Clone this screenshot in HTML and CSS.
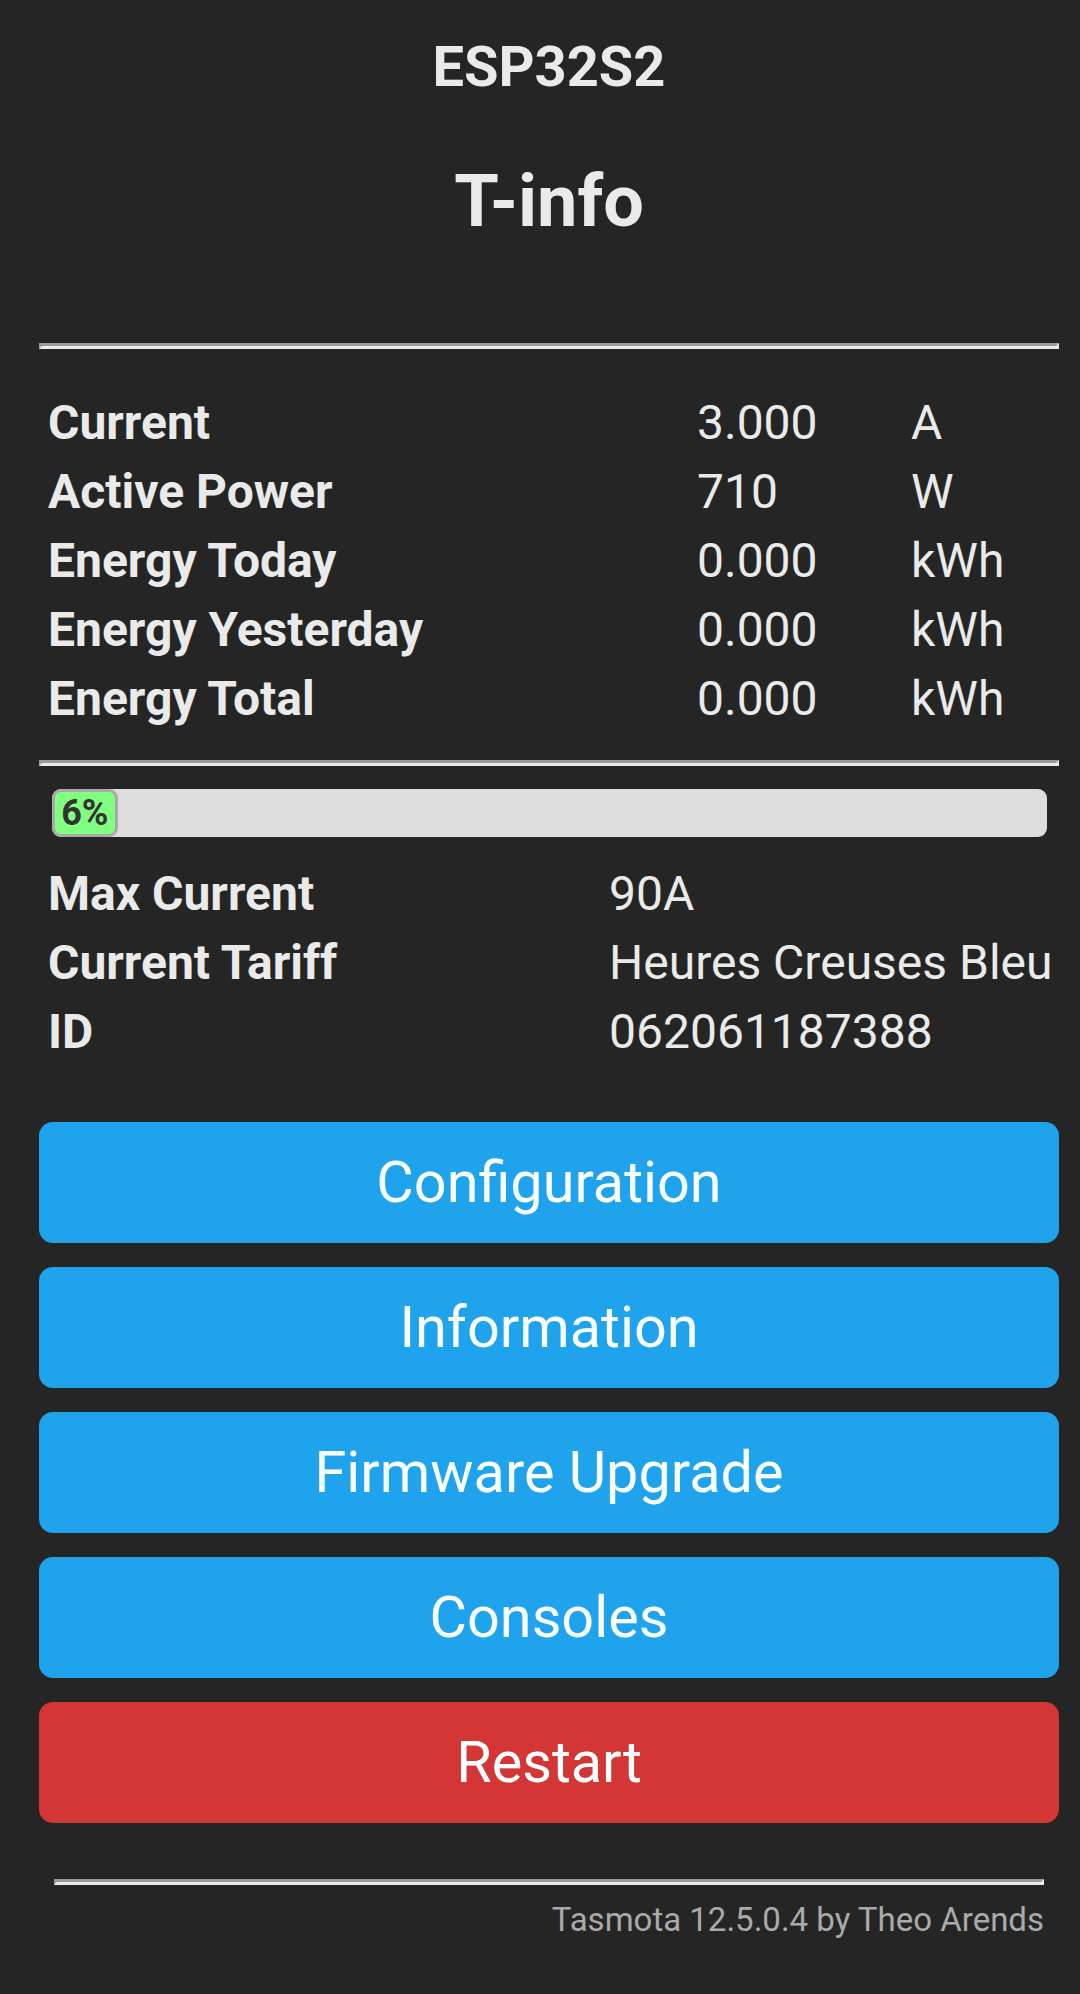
FILE: index.html
```html
<!DOCTYPE html>
<html lang="en">
<head>
    <meta charset="UTF-8">
    <title>T-info - Main Menu</title>
    <link rel="stylesheet" href="styles.css">
</head>
<body>
    <div class="main">
        <div class="header">
            <h3>ESP32S2</h3>
            <h2>T-info</h2>
        </div>

        <hr>

        <table class="sensors">
            <tr><th>Current</th><td>3.000</td><td>A</td></tr>
            <tr><th>Active Power</th><td>710</td><td>W</td></tr>
            <tr><th>Energy Today</th><td>0.000</td><td>kWh</td></tr>
            <tr><th>Energy Yesterday</th><td>0.000</td><td>kWh</td></tr>
            <tr><th>Energy Total</th><td>0.000</td><td>kWh</td></tr>
        </table>

        <hr>

        <div class="bar">
            <div class="bar-fill" style="width:6%">6%</div>
        </div>

        <table class="info">
            <tr><th>Max Current</th><td>90A</td></tr>
            <tr><th>Current Tariff</th><td>Heures Creuses Bleu</td></tr>
            <tr><th>ID</th><td>062061187388</td></tr>
        </table>

        <div class="menu">
            <button>Configuration</button>
            <button>Information</button>
            <button>Firmware Upgrade</button>
            <button>Consoles</button>
            <button class="bred">Restart</button>
        </div>

        <div class="footer">
            <hr>
            <a href="#">Tasmota 12.5.0.4 by Theo Arends</a>
        </div>
    </div>
</body>
</html>
```

FILE: styles.css
```css
body {
    margin: 0;
    background: #252525;
    color: #eaeaea;
    font-family: Roboto, "Liberation Sans", sans-serif;
}

.main {
    width: 1020px;
    margin-left: 39px;
    padding-top: 34px;
}

.header {
    text-align: center;
}

h3 {
    margin: 0;
    font-size: 56px;
    line-height: 66px;
}

h2 {
    margin: 60px 0 0;
    font-size: 72px;
    line-height: 84px;
}

hr {
    height: 0;
    margin: 0;
    border-style: solid;
    border-width: 3px;
    border-color: #9a9a9a #eaeaea #eaeaea #9a9a9a;
}

.header + hr {
    margin-top: 99px;
}

table {
    width: 100%;
    table-layout: fixed;
    border-spacing: 6px;
    font-size: 48px;
    line-height: 57px;
}

th,
td {
    padding: 3px;
    text-align: left;
    white-space: nowrap;
}

th {
    font-weight: bold;
}

.sensors {
    margin: 36px 0 24px;
}

.sensors th { width: 637px; }
.sensors td:nth-child(2) { width: 202px; }

.bar {
    margin: 23px 12px 0 13px;
    height: 48px;
    background: #ddd;
    border-radius: 9px;
}

.bar-fill {
    height: 42px;
    background: #80ff80;
    border: 3px solid #aaa;
    border-radius: 9px;
    color: #333;
    font-size: 36px;
    font-weight: bold;
    line-height: 42px;
    text-align: center;
}

.info {
    margin-top: 19px;
}

.info th { width: 549px; }

.menu {
    margin-top: 53px;
    display: flex;
    flex-direction: column;
    gap: 24px;
}

button {
    border: 0;
    border-radius: 14px;
    background: #1fa3ec;
    color: #faffff;
    font-family: Roboto, "Liberation Sans", sans-serif;
    font-size: 57.6px;
    line-height: 115px;
    padding: 3px 18px;
    width: 100%;
    cursor: pointer;
}

button.bred {
    background: #d43535;
}

.footer {
    margin-top: 56px;
    text-align: right;
    font-size: 33px;
    line-height: 39px;
}

.footer hr {
    margin: 0 15px 15px;
}

.footer a {
    color: #aaa;
    text-decoration: none;
    margin-right: 15px;
}
```
